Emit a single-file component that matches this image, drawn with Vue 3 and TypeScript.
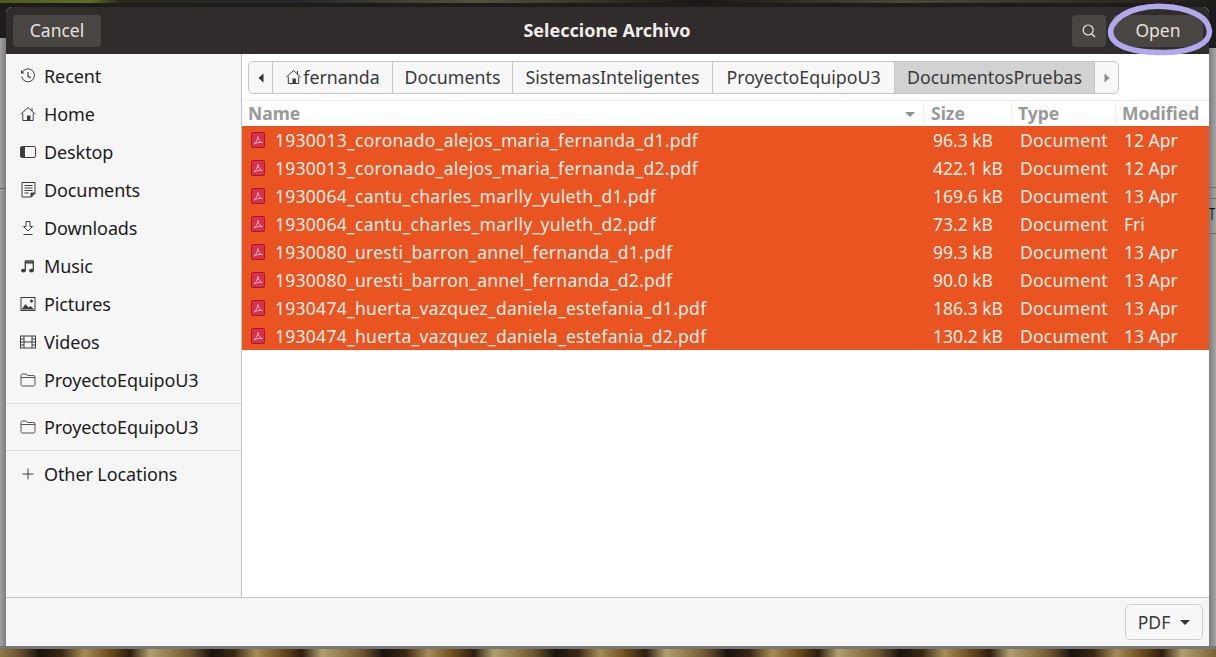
<script setup lang="ts">
interface Place { name: string; icon: string; sep?: boolean }
const places: Place[] = [
  { name: 'Recent', icon: 'recent' },
  { name: 'Home', icon: 'home' },
  { name: 'Desktop', icon: 'desktop' },
  { name: 'Documents', icon: 'documents' },
  { name: 'Downloads', icon: 'downloads' },
  { name: 'Music', icon: 'music' },
  { name: 'Pictures', icon: 'pictures' },
  { name: 'Videos', icon: 'videos' },
  { name: 'ProyectoEquipoU3', icon: 'folder', sep: true },
  { name: 'ProyectoEquipoU3', icon: 'folder', sep: true },
  { name: 'Other Locations', icon: 'plus' },
]
const crumbs = [
  { name: 'Documents', cls: 'w-docs' },
  { name: 'SistemasInteligentes', cls: 'w-sis' },
  { name: 'ProyectoEquipoU3', cls: 'w-pro' },
]
const files = [
  ['1930013_coronado_alejos_maria_fernanda_d1.pdf', '96.3 kB', '12 Apr'],
  ['1930013_coronado_alejos_maria_fernanda_d2.pdf', '422.1 kB', '12 Apr'],
  ['1930064_cantu_charles_marlly_yuleth_d1.pdf', '169.6 kB', '13 Apr'],
  ['1930064_cantu_charles_marlly_yuleth_d2.pdf', '73.2 kB', 'Fri'],
  ['1930080_uresti_barron_annel_fernanda_d1.pdf', '99.3 kB', '13 Apr'],
  ['1930080_uresti_barron_annel_fernanda_d2.pdf', '90.0 kB', '13 Apr'],
  ['1930474_huerta_vazquez_daniela_estefania_d1.pdf', '186.3 kB', '13 Apr'],
  ['1930474_huerta_vazquez_daniela_estefania_d2.pdf', '130.2 kB', '13 Apr'],
]
</script>

<template>
  <div class="stage">
    <span class="behind-letter">T</span>
    <div class="dialog">
      <header class="titlebar">
        <button class="hbtn cancel">Cancel</button>
        <div class="title">Seleccione Archivo</div>
        <button class="hbtn search" aria-label="Search">
          <svg width="16" height="16" viewBox="0 0 16 16" fill="none" stroke="#e8e6e3" stroke-width="1.2"><circle cx="7.2" cy="7" r="5"/><path d="M11 11l3 3" stroke-width="1.5"/></svg>
        </button>
        <button class="hbtn open">Open</button>
      </header>
      <div class="middle">
        <aside class="sidebar">
          <template v-for="(p, i) in places" :key="i">
            <div class="place">
              <svg class="picon" width="16" height="16" viewBox="0 0 16 16" fill="none" stroke="#3d3d3d" stroke-width="1">
                <template v-if="p.icon === 'recent'">
                  <path d="M2.3 4.2A6.5 6.5 0 1 1 1.6 8.5"/><path d="M1 2v3.4h3.4" fill="#3d3d3d" stroke="none"/><path d="M8 4v4.3l2.6 1.6" stroke-width="1.2"/>
                </template>
                <template v-else-if="p.icon === 'home'">
                  <path d="M.8 8.2L8 1.5l7.2 6.7"/><path d="M2.8 7.5V14.5h10.4V7.5"/><path d="M7 14.5V9.5h3.4v5" fill="#3d3d3d" stroke="none"/><path d="M12 2v3"/>
                </template>
                <template v-else-if="p.icon === 'desktop'">
                  <rect x=".5" y="2.5" width="15" height="11" rx="1.6"/><path d="M1 3h4v10H1z" fill="#3d3d3d" stroke="none"/>
                </template>
                <template v-else-if="p.icon === 'documents'">
                  <path d="M2 .5h13v11l-3.5 3.5H2z"/><path d="M4.5 3.5h8M4.5 6h8M4.5 8.5h8M4.5 11h4" stroke-width="1.1"/><path d="M11 15v-4h4" fill="#3d3d3d"/>
                </template>
                <template v-else-if="p.icon === 'downloads'">
                  <path d="M6 1.5h4v5h2.5L8 11 3.5 6.5H6z"/><path d="M3.5 14.5h9"/>
                </template>
                <template v-else-if="p.icon === 'music'">
                  <path d="M5 3h8.5M5 4.8h8.5" stroke-width="1.6"/><path d="M5.3 3v9M13.3 3v9" stroke-width="1.3"/><ellipse cx="3.5" cy="12.6" rx="2.4" ry="1.9" fill="#3d3d3d" stroke="none"/><ellipse cx="11.5" cy="12.6" rx="2.4" ry="1.9" fill="#3d3d3d" stroke="none"/>
                </template>
                <template v-else-if="p.icon === 'pictures'">
                  <rect x="1" y="1.5" width="14" height="13" />
                  <path d="M1.5 13.5l4-5.5 3 3.5 2-1.5 4 3.5z" fill="#3d3d3d" stroke="none"/><circle cx="11.5" cy="5" r="1.5" fill="#3d3d3d" stroke="none"/>
                </template>
                <template v-else-if="p.icon === 'videos'">
                  <rect x=".5" y="2" width="15" height="12"/><path d="M4 2v12M12 2v12"/><path d="M.5 5H4M.5 8H4M.5 11H4M12 5h3.5M12 8h3.5M12 11h3.5M4 8h8"/>
                </template>
                <template v-else-if="p.icon === 'folder'">
                  <path d="M1 3.5A1.5 1.5 0 0 1 2.5 2H6l1.5 1.5h6A1.5 1.5 0 0 1 15 5v7.5a1.5 1.5 0 0 1-1.5 1.5h-11A1.5 1.5 0 0 1 1 12.5zM1 5.5h14" stroke="#555"/>
                </template>
                <template v-else>
                  <path d="M8 2.5v11M2.5 8h11"/>
                </template>
              </svg>
              <span>{{ p.name }}</span>
            </div>
            <div v-if="p.sep" class="sep"></div>
          </template>
        </aside>
        <main class="content">
          <div class="pathbar-wrap">
            <nav class="pathbar">
              <div class="crumb arrow first"><svg width="8" height="12" viewBox="0 0 8 12"><path d="M6.5 1.5v9L1.5 6z" fill="#333"/></svg></div>
              <div class="crumb home-crumb">
                <svg width="17" height="16" viewBox="0 0 16 16" fill="none" stroke="#3d3d3d" stroke-width="1"><path d="M.8 8.2L8 1.5l7.2 6.7"/><path d="M2.8 7.5V14.5h10.4V7.5"/><path d="M7 14.5V9.5h3.4v5" fill="#3d3d3d" stroke="none"/><path d="M12 2v3"/></svg>
                <span>fernanda</span>
              </div>
              <div v-for="c in crumbs" :key="c.name" class="crumb" :class="c.cls">{{ c.name }}</div>
              <div class="crumb current">DocumentosPruebas</div>
              <div class="crumb arrow last"><svg width="8" height="12" viewBox="0 0 8 12"><path d="M1.5 1.5v9L6.5 6z" fill="#8c8c8c"/></svg></div>
            </nav>
          </div>
          <div class="list">
            <div class="row head">
              <div class="c-name">Name<i class="sort"></i></div>
              <div class="c-size">Size</div>
              <div class="c-type">Type</div>
              <div class="c-mod">Modified</div>
            </div>
            <div v-for="f in files" :key="f[0]" class="row file">
              <div class="c-name">
                <svg class="pdf" width="14" height="16" viewBox="0 0 14 16"><rect x=".5" y=".5" width="13" height="15" rx="1.5" fill="#d92f4a" stroke="#a01c30"/><path d="M2.8 12c2-1.2 3.4-3.5 4.1-7.5.5 3.5 1.8 5.500 4.600 6-2.800-.3-5.700 0-8.700 1.500z" fill="none" stroke="#f8d5da" stroke-width=".8"/></svg>
                <span class="fname">{{ f[0] }}</span>
              </div>
              <div class="c-size">{{ f[1] }}</div>
              <div class="c-type">Document</div>
              <div class="c-mod">{{ f[2] }}</div>
            </div>
          </div>
        </main>
      </div>
      <footer class="footer">
        <button class="filter">PDF<i class="caret"></i></button>
      </footer>
    </div>
    <svg class="ring" width="112" height="56" viewBox="1105 2 112 56" fill="none" stroke="#b1a8ed" stroke-width="5.5" stroke-linecap="round">
      <path d="M1177 8C1150 3 1122 9 1112 26C1105 43 1126 53 1165 52.5C1194 52 1210 43 1209.5 31C1208 18 1196 11 1172 7"/>
    </svg>
  </div>
</template>

<style>
html, body { margin: 0; background: #1e1c1a; overflow: hidden; }
</style>

<style scoped>
.stage {
  position: relative;
  width: 1216px;
  height: 657px;
  box-sizing: border-box;
  padding: 7px 7px 11px 6px;
  font-family: "Noto Sans", sans-serif;
  background:
    linear-gradient(#77777a, #77777a) 0 646px / 1216px 3px no-repeat,
    linear-gradient(#666, #666) 0 188px / 6px 1px no-repeat,
    linear-gradient(90deg, #a2a2a2, #7d7d7d) 0 38px / 6px 610px no-repeat,
    linear-gradient(#6e6e6e, #6e6e6e) 1209px 187px / 7px 1px no-repeat,
    linear-gradient(#6e6e6e, #6e6e6e) 1209px 198px / 7px 1px no-repeat,
    linear-gradient(#6e6e6e, #6e6e6e) 1209px 233px / 7px 1px no-repeat,
    linear-gradient(90deg, #7d7d7d, #a6a6a6) 1209px 48px / 7px 600px no-repeat,
    linear-gradient(90deg, #4c5a1e 0, #5f6e24 90px, #2a2a1e 120px, #26282a 300px, #55503a 480px, #1a1814 700px, #4a4638 900px, #1f1d18 1216px) 0 0 / 1216px 3px no-repeat,
    repeating-linear-gradient(90deg, #8d7a48 0, #6b5630 18px, #1b130c 40px, #3a2814 62px, #a58c55 84px, #70501f 108px, #2d1d0d 130px, #b0a070 150px, #8d7a48 172px) 0 648px / 1216px 9px no-repeat,
    #1e1c1a;
}
.behind-letter {
  position: absolute;
  left: 1209px;
  top: 204px;
  font: 17px/20px "Noto Sans", sans-serif;
  color: #151515;
  transform: scaleX(.65);
  transform-origin: left center;
}
.dialog {
  position: relative;
  height: 100%;
  display: flex;
  flex-direction: column;
  background: #f6f6f6;
  border-radius: 6px 6px 0 0;
  overflow: hidden;
}
.titlebar {
  flex: 0 0 47px;
  display: flex;
  align-items: center;
  padding: 0 6px 0 7px;
  background: #2f2c2b;
}
.title {
  flex: 1;
  text-align: center;
  color: #efece9;
  font-size: 18px;
  font-weight: 700;
  padding: 0 0 2px 41px;
}
.hbtn {
  height: 32px;
  border: 0;
  border-radius: 4px;
  background: #494543;
  color: #e4e1de;
  font: 17.5px "Noto Sans", sans-serif;
  padding: 0 0 2px;
  display: flex;
  align-items: center;
  justify-content: center;
}
.cancel { width: 88px; }
.search { width: 34px; margin-right: 7px; padding: 0; }
.open { width: 90px; }
.middle { flex: 1; display: flex; min-height: 0; border-bottom: 1px solid #c4c4c4; }
.sidebar {
  width: 235px;
  flex: none;
  padding-top: 3px;
  background: #f6f6f6;
  border-right: 1px solid #c7c7c7;
  color: #1c1c1c;
  font-size: 18px;
}
.place {
  height: 38px;
  display: flex;
  align-items: center;
  padding-left: 14px;
  gap: 8px;
  letter-spacing: -.1px;
}
.picon { flex: none; }
.sep { height: 1px; background: #dcdcdc; margin: 4px 0; }
.content { flex: 1; min-width: 0; background: #fff; display: flex; flex-direction: column; }
.pathbar-wrap { height: 46px; flex: none; padding: 7px 0 0 6px; box-sizing: border-box; background: #fff; }
.pathbar {
  display: inline-flex;
  height: 33px;
  box-sizing: border-box;
  border: 1px solid #c5c5c5;
  border-radius: 5px;
  background: #f7f7f7;
  color: #3a3a3a;
  font-size: 17.8px;
  overflow: hidden;
}
.crumb {
  display: flex;
  align-items: center;
  justify-content: center;
  box-sizing: border-box;
  padding: 0 0 2px;
  border-right: 1px solid #c5c5c5;
  white-space: nowrap;
}
.arrow { width: 24px; padding: 0; }
.home-crumb { width: 120px; gap: 1px; }
.w-docs { width: 120px; }
.w-sis { width: 200px; }
.w-pro { width: 182px; }
.current { background: #d2d2d2; width: 200px; }
.last { border-right: 0; width: 23px; }
.list { flex: 1; }
.row { display: flex; align-items: center; }
.head {
  height: 26px;
  box-sizing: border-box;
  border-top: 1px solid #f0f0f0;
  color: #999;
  font-size: 17.5px;
  font-weight: 700;
}
.head > div { height: 25px; padding-bottom: 2px; display: flex; align-items: center; box-sizing: border-box; border-right: 1px solid #f0f0f0; }
.head .c-mod { border-right: 0; padding-left: 6px; }
.head .c-name { padding-left: 6px; position: relative; }
.head .c-size { padding-left: 7px; }
.head .c-type { padding-left: 6px; }
.sort {
  position: absolute;
  right: 8px;
  top: 11px;
  border: 5px solid transparent;
  border-top: 5px solid #8f8f8f;
  border-bottom: 0;
}
.c-name { width: 682px; box-sizing: border-box; }
.c-size { width: 88px; box-sizing: border-box; }
.c-type { width: 104px; box-sizing: border-box; }
.c-mod { flex: 1; box-sizing: border-box; white-space: nowrap; }
.file {
  height: 28px;
  background: #e95420;
  color: #fdeee8;
  font-size: 17.5px;
}
.file .c-name { display: flex; align-items: center; padding-left: 9px; gap: 10px; }
.fname { letter-spacing: .27px; }
.file .c-size { padding-left: 9px; }
.file .c-type { padding-left: 8px; letter-spacing: .25px; }
.file .c-mod { padding-left: 8px; }
.pdf { flex: none; }
.footer {
  flex: 0 0 48px;
  display: flex;
  align-items: center;
  justify-content: flex-end;
  padding-right: 6px;
  background: #f6f6f6;
}
.filter {
  width: 78px;
  height: 36px;
  border: 1px solid #cfcfcf;
  border-radius: 5px;
  background: #f7f7f7;
  color: #3a3a3a;
  font: 17.5px "Noto Sans", sans-serif;
  display: flex;
  align-items: center;
  justify-content: center;
  gap: 10px;
  padding: 0;
}
.caret { border: 5px solid transparent; border-top: 5px solid #333; border-bottom: 0; }
.ring {
  position: absolute;
  left: 1105px;
  top: 2px;
}
</style>
